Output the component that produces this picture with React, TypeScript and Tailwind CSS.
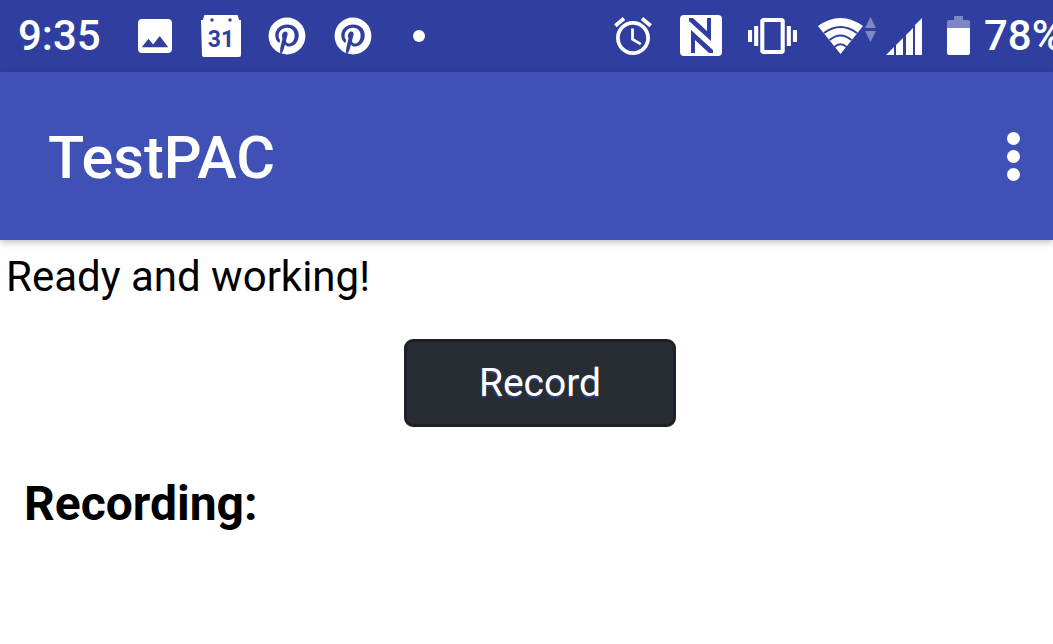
import { FaPinterest } from "react-icons/fa";

function CalendarIcon() {
  return (
    <div className="relative ml-[29px] h-[42px] w-[40px] shrink-0">
      <svg viewBox="0 0 40 42" className="block h-full w-full">
        <path d="M3 1q0-1 1-1h32q1 0 1 1l1 4h2v35a2 2 0 0 1-2 2H3a2 2 0 0 1-2-2L0 5h2z" fill="#fff" />
        <circle cx="11" cy="5" r="1.7" fill="#303f9f" />
        <circle cx="29" cy="5" r="1.7" fill="#303f9f" />
      </svg>
      <span className="absolute inset-x-0 top-[12px] text-center font-['Roboto'] text-[23px] leading-[26px] font-bold text-[#303f9f]">
        31
      </span>
    </div>
  );
}

function Battery() {
  return (
    <svg viewBox="0 0 23 39" className="ml-[25px] block h-[39px] w-[23px] shrink-0 -translate-y-px">
      <path d="M7 0h9v4h5a2 2 0 0 1 2 2v7H0V6a2 2 0 0 1 2-2h5z" fill="#7c87c4" />
      <path d="M0 12h23v25a2 2 0 0 1-2 2H2a2 2 0 0 1-2-2z" fill="#fff" />
    </svg>
  );
}

export default function App() {
  return (
    <div className="h-[644px] w-[1053px] overflow-hidden bg-white font-['Roboto',sans-serif]">
      <div className="flex h-[72px] items-center overflow-hidden bg-[#303f9f] pl-[18px] text-white">
        <span className="w-[82px] shrink-0 text-[42px] leading-none font-medium">9:35</span>
        <svg viewBox="3 3 18 18" className="ml-[38px] block h-[34px] w-[34px] shrink-0" fill="#fff">
          <path d="M21 19V5c0-1.1-.9-2-2-2H5c-1.1 0-2 .9-2 2v14c0 1.1.9 2 2 2h14c1.1 0 2-.9 2-2zM8.500 13.500l2.500 3.010L14.500 12l4.500 6H5l3.500-4.500z" />
        </svg>
        <CalendarIcon />
        <FaPinterest className="ml-[27px] h-[38px] w-[38px] shrink-0" />
        <FaPinterest className="ml-[28px] h-[38px] w-[38px] shrink-0" />
        <div className="ml-[41px] h-[12px] w-[12px] shrink-0 rounded-full bg-white" />

        <svg viewBox="2 1.86 20 20.14" className="ml-[189px] block h-[38px] w-[38px] shrink-0" fill="#fff">
          <path d="M22 5.720l-4.600-3.860-1.290 1.530 4.600 3.860L22 5.720zM7.880 3.390L6.600 1.860 2 5.710l1.290 1.530 4.590-3.850zM12.500 8H11v6l4.750 2.850.75-1.230-4-2.370V8zM12 4c-4.970 0-9 4.030-9 9s4.020 9 9 9c4.970 0 9-4.030 9-9s-4.030-9-9-9zm0 16c-3.870 0-7-3.130-7-7s3.130-7 7-7 7 3.130 7 7-3.130 7-7 7z" />
        </svg>
        <svg viewBox="0 0 42 41" className="ml-[28px] block h-[41px] w-[42px] shrink-0 -translate-y-px">
          <rect width="42" height="41" rx="4" fill="#fff" />
          <path d="M9 3h4L27 16V3h4V26L9 6z" fill="#303f9f" />
          <path d="M33 38h-4L15 25V38H11V15L33 35z" fill="#303f9f" />
        </svg>
        <svg viewBox="0 0 24 18" className="ml-[26px] block h-[36px] w-[49px] shrink-0" preserveAspectRatio="none" fill="#fff">
          <path d="M0 6h2v6H0zM3 4h2v10H3zM22 6h2v6h-2zM19 4h2v10h-2zM16.500 0h-9C6.670 0 6 .67 6 1.500v15c0 .83.67 1.500 1.500 1.500h9c.83 0 1.500-.67 1.500-1.500v-15c0-.83-.67-1.500-1.500-1.500zM16 16H8V2h8z" />
        </svg>
        <svg viewBox="0 0 58 38" className="ml-[21px] block h-[38px] w-[58px] shrink-0 -translate-y-px">
          <path d="M0 10Q22.500-6 45 10L22.500 38z" fill="#fff" />
          <path d="M6 17Q22.500 5 39 17M11.500 24Q22.500 15 33.500 24M16.500 31Q22.500 25.500 28.500 31" fill="none" stroke="#303f9f" strokeWidth="2" />
          <path d="M52.500 1l5.500 11H47zM47 15h11l-5.500 11z" fill="#7c87c4" />
        </svg>
        <svg viewBox="0 0 36 37" className="ml-[10px] block h-[37px] w-[36px] shrink-0" fill="#fff">
          <path d="M0 37L8 29V37zM10 27L17 20V37H10zM20 17L27 10V37H20zM29 7L36 0V37H29z" />
        </svg>
        <Battery />
        <span className="ml-[14px] shrink-0 text-[42px] leading-none font-medium">78%</span>
      </div>

      <div className="relative flex h-[168px] items-center justify-between bg-[#3f51b5] pr-[33px] pl-[48px] shadow-[0_2px_7px_rgba(0,0,0,0.28)]">
        <span className="pt-[5px] text-[59.500px] leading-none font-medium text-white">TestPAC</span>
        <div className="flex flex-col gap-[5px]">
          <div className="h-[13px] w-[13px] rounded-full bg-white" />
          <div className="h-[13px] w-[13px] rounded-full bg-white" />
          <div className="h-[13px] w-[13px] rounded-full bg-white" />
        </div>
      </div>

      <div className="pt-[12px] pl-[6px] text-[42px] leading-[50px] text-black">Ready and working!</div>

      <div className="mt-[37px] flex pl-[404px]">
        <button className="h-[88px] w-[272px] rounded-[9px] border-[3px] border-[#1d2026] bg-[#282d33] text-[39px] leading-none text-white [text-shadow:0_2px_0_#2f3f7f]">
          Record
        </button>
      </div>

      <div className="mt-[47px] pl-[24px] text-[48px] leading-[60px] font-bold text-black">Recording:</div>
    </div>
  );
}
